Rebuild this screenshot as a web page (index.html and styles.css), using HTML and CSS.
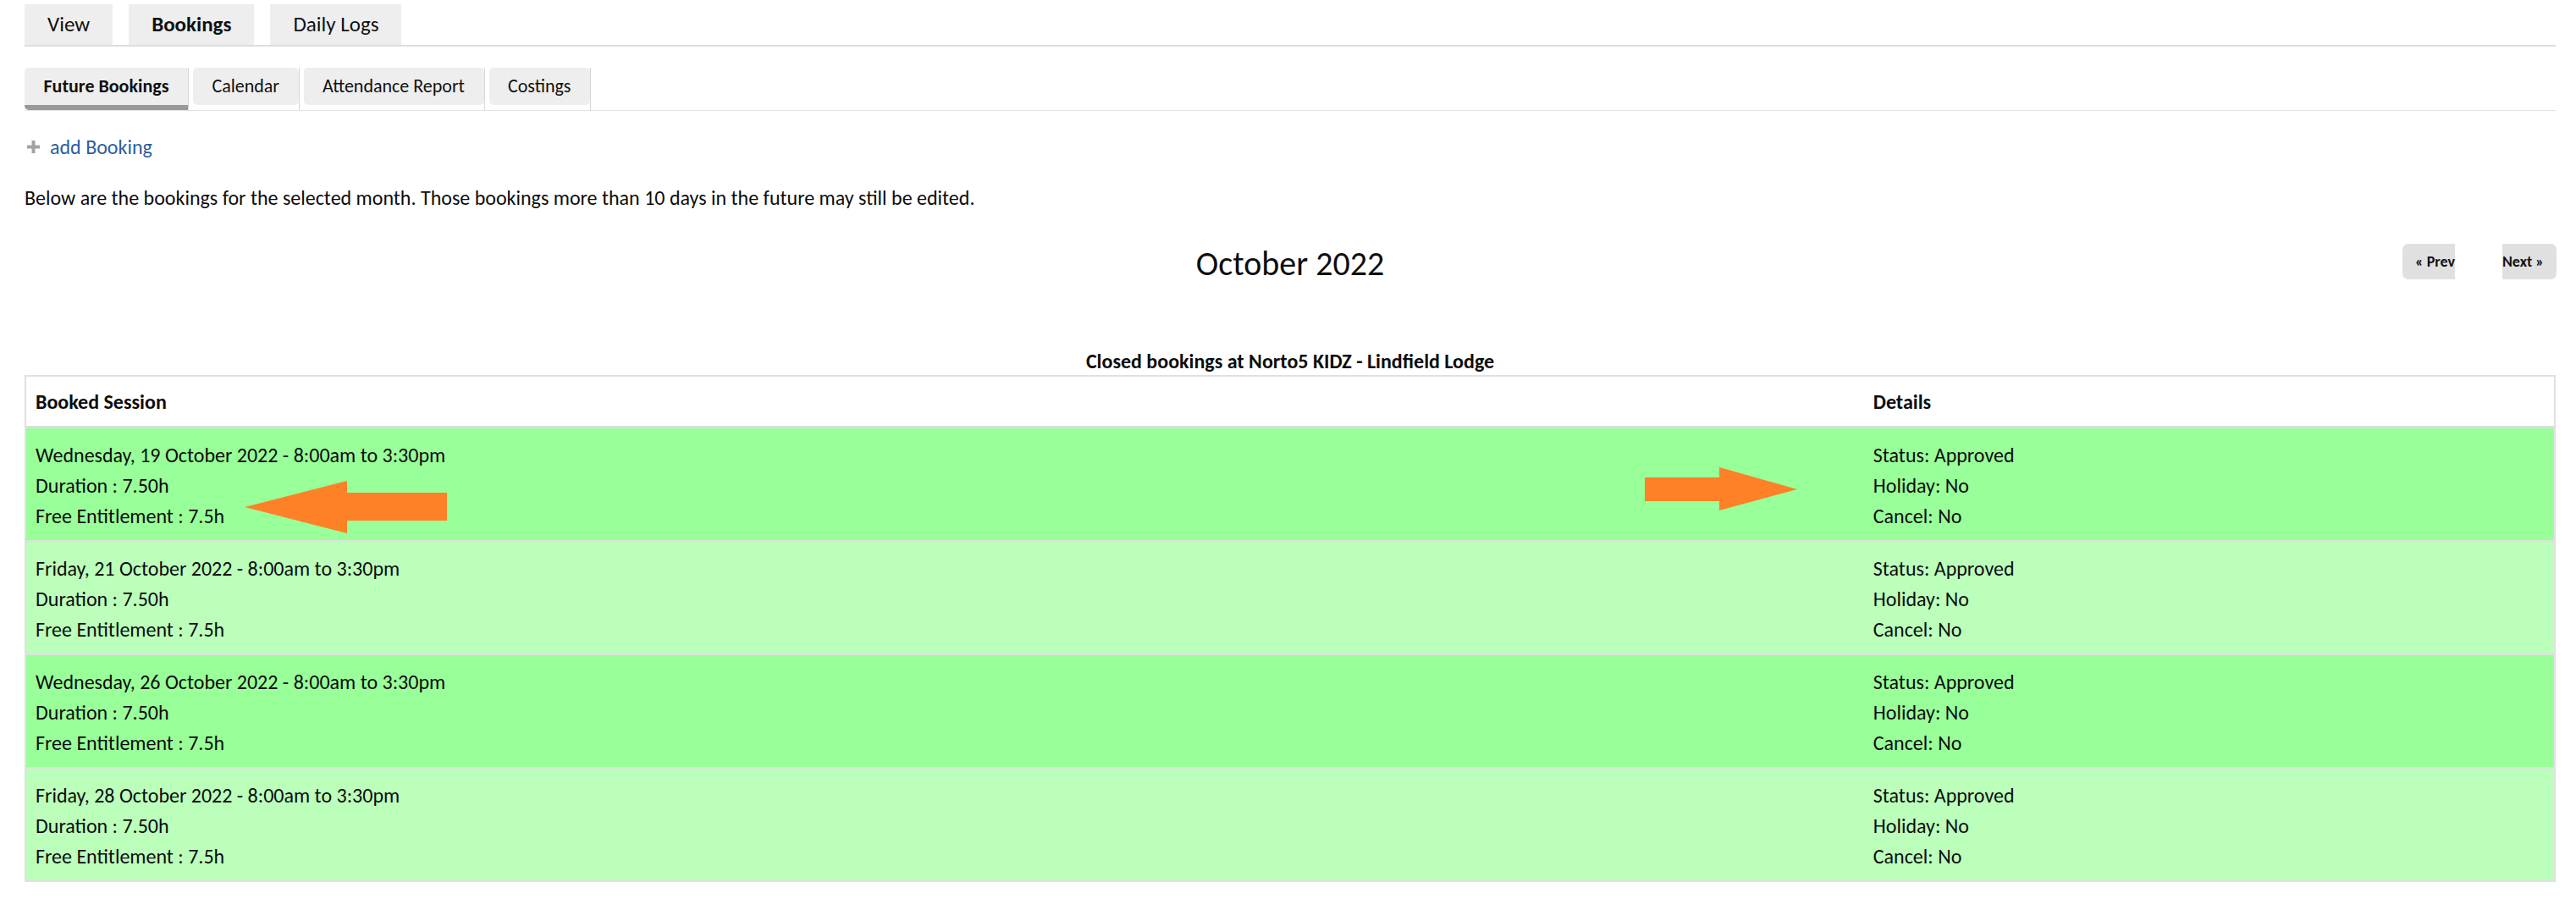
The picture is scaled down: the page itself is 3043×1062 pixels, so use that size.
FILE: index.html
```html
<!DOCTYPE html>
<html lang="en">
<head>
<meta charset="utf-8">
<title>Bookings</title>
<link rel="stylesheet" href="styles.css">
</head>
<body>
<div class="page">
  <nav class="tabs">
    <a class="tab">View</a>
    <a class="tab tab-active">Bookings</a>
    <a class="tab">Daily Logs</a>
  </nav>

  <nav class="subtabs">
    <div class="subtab-item"><a class="subtab subtab-active">Future Bookings</a></div>
    <div class="subtab-item"><a class="subtab">Calendar</a></div>
    <div class="subtab-item"><a class="subtab">Attendance Report</a></div>
    <div class="subtab-item"><a class="subtab">Costings</a></div>
  </nav>

  <div class="add">
    <svg class="plus" width="15" height="15" viewBox="0 0 15 15"><rect x="5.5" y="0" width="4" height="15" fill="#a3a3a3"/><rect x="0" y="5.5" width="15" height="4" fill="#a3a3a3"/></svg>
    <a class="add-link">add Booking</a>
  </div>

  <p class="intro">Below are the bookings for the selected month. Those bookings more than 10 days in the future may still be edited.</p>

  <div class="month-row">
    <div></div>
    <h2 class="month">October 2022</h2>
    <div class="pager">
      <a class="pager-btn prev">« Prev</a>
      <a class="pager-btn next">Next »</a>
    </div>
  </div>

  <div class="table-title">Closed bookings at Norto5 KIDZ - Lindfield Lodge</div>

  <div class="table">
    <div class="row head">
      <div class="cell">Booked Session</div>
      <div class="cell">Details</div>
    </div>
    <div class="row body odd first">
      <div class="cell">
        <div>Wednesday, 19 October 2022 - 8:00am to 3:30pm</div>
        <div>Duration : 7.50h</div>
        <div>Free Entitlement : 7.5h</div>
      </div>
      <div class="cell">
        <div>Status: Approved</div>
        <div>Holiday: No</div>
        <div>Cancel: No</div>
      </div>
      <svg class="arrow arrow-left" width="240" height="63" viewBox="289 568 240 63"><polygon points="289,599 410,568 410,582 528,582 528,615 410,615 410,630" fill="#ff8127"/></svg>
      <svg class="arrow arrow-right" width="181" height="52" viewBox="1943 552 181 52"><polygon points="1943,564 2031,564 2031,552 2123,578 2031,603 2031,592 1943,592" fill="#ff8127"/></svg>
    </div>
    <div class="row body even">
      <div class="cell">
        <div>Friday, 21 October 2022 - 8:00am to 3:30pm</div>
        <div>Duration : 7.50h</div>
        <div>Free Entitlement : 7.5h</div>
      </div>
      <div class="cell">
        <div>Status: Approved</div>
        <div>Holiday: No</div>
        <div>Cancel: No</div>
      </div>
    </div>
    <div class="row body odd">
      <div class="cell">
        <div>Wednesday, 26 October 2022 - 8:00am to 3:30pm</div>
        <div>Duration : 7.50h</div>
        <div>Free Entitlement : 7.5h</div>
      </div>
      <div class="cell">
        <div>Status: Approved</div>
        <div>Holiday: No</div>
        <div>Cancel: No</div>
      </div>
    </div>
    <div class="row body even">
      <div class="cell">
        <div>Friday, 28 October 2022 - 8:00am to 3:30pm</div>
        <div>Duration : 7.50h</div>
        <div>Free Entitlement : 7.5h</div>
      </div>
      <div class="cell">
        <div>Status: Approved</div>
        <div>Holiday: No</div>
        <div>Cancel: No</div>
      </div>
    </div>
  </div>
</div>
</body>
</html>
```

FILE: styles.css
```css
html, body {
  margin: 0;
  padding: 0;
  background: #ffffff;
}

body {
  font-family: "Carlito", "Lato", sans-serif;
  color: #0d0d0d;
  font-size: 24px;
}

.page {
  padding: 5px 24px 20px 29px;
}

/* top tabs */
.tabs {
  display: flex;
  gap: 19px;
  border-bottom: 2px solid #dddddd;
}

.tab {
  display: block;
  height: 48px;
  line-height: 48px;
  padding: 0 27px;
  background: #eeeeee;
  font-size: 25px;
  color: #111111;
}

.tab-active {
  font-weight: bold;
}

/* sub tabs */
.subtabs {
  display: flex;
  margin-top: 25px;
  border-bottom: 1px solid #e3e3e3;
}

.subtab-item {
  height: 50px;
  border-right: 1px solid #d6d6d6;
  margin-right: 5px;
}

.subtab {
  display: block;
  height: 44px;
  line-height: 44px;
  padding: 0 22.5px;
  background: #eeeeee;
  border-radius: 5px;
  font-size: 22px;
  color: #111111;
}

.subtab-active {
  font-weight: bold;
  border-bottom: 6px solid #999999;
  border-radius: 5px 0 0 5px;
}

/* add booking */
.add {
  display: flex;
  align-items: center;
  height: 30px;
  margin-top: 28px;
}

.plus {
  margin-left: 3px;
  margin-right: 12px;
  margin-top: -2px;
  filter: blur(0.4px);
}

.add-link {
  color: #2d5ea0;
  font-size: 24px;
  line-height: 30px;
}

.intro {
  margin: 30px 0 0;
  line-height: 30px;
}

/* month row */
.month-row {
  display: grid;
  grid-template-columns: 1fr auto 1fr;
  align-items: start;
  margin-top: 38px;
}

.month {
  margin: 0;
  font-size: 40px;
  font-weight: normal;
  line-height: 50px;
}

.pager {
  justify-self: end;
  display: flex;
  gap: 56px;
  margin-top: 1px;
  margin-right: -1px;
}

.pager-btn {
  display: block;
  height: 42px;
  line-height: 42px;
  background: #e0e0e0;
  font-size: 18px;
  font-weight: bold;
  color: #111111;
  white-space: nowrap;
  overflow: hidden;
}

.prev {
  width: 47px;
  padding-left: 15px;
  border-radius: 7px 0 0 7px;
}

.next {
  width: 49px;
  padding-right: 15px;
  border-radius: 0 7px 7px 0;
}

/* table */
.table-title {
  margin-top: 75px;
  margin-bottom: 1px;
  text-align: center;
  font-weight: bold;
  font-size: 24px;
  line-height: 30px;
}

.table {
  border: 2px solid #e0e0e0;
}

.row {
  display: grid;
  grid-template-columns: 72.7% 1fr;
}

.cell {
  padding: 0 11px;
}

.head {
  height: 58px;
  align-items: center;
  font-weight: bold;
  font-size: 24px;
  background: #ffffff;
  border-bottom: 3px solid #dddddd;
}

.body {
  position: relative;
  padding: 14px 0 10px;
  line-height: 36px;
  border-top: 2px solid #e0e0e0;
}

.body.first {
  border-top: none;
}

.odd {
  background: #99ff99;
}

.even {
  background: #bbffbb;
}

.arrow {
  position: absolute;
  display: block;
}

.arrow-left {
  left: 258px;
  top: 62px;
}

.arrow-right {
  left: 1912px;
  top: 46px;
}
```
